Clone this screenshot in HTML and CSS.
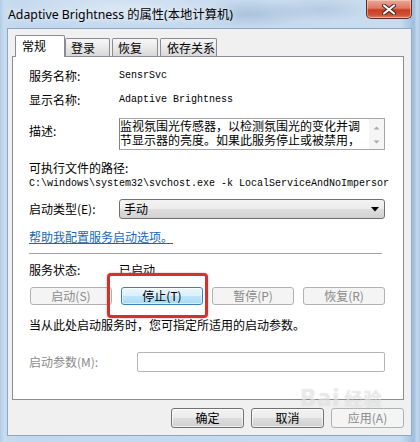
FILE: index.html
```html
<!DOCTYPE html>
<html lang="zh-CN">
<head>
<meta charset="utf-8">
<title>Adaptive Brightness 的属性(本地计算机)</title>
<link rel="stylesheet" href="styles.css">
</head>
<body>
<div class="win">
  <div class="titlebar">
    <span class="title">Adaptive Brightness 的属性(本地计算机)</span>
    <div class="close">
      <svg width="14" height="11" viewBox="0 0 14 11">
        <path d="M2 1.5 L12 9.5 M12 1.5 L2 9.5" stroke="#3b2320" stroke-width="4" stroke-linecap="round"/>
        <path d="M2 1.5 L12 9.5 M12 1.5 L2 9.5" stroke="#ffffff" stroke-width="2.2" stroke-linecap="round"/>
      </svg>
    </div>
  </div>
  <div class="client">
    <div class="tabs">
      <div class="tab active">常规</div>
      <div class="tab t2">登录</div>
      <div class="tab t3">恢复</div>
      <div class="tab t4">依存关系</div>
    </div>
    <div class="panel">
      <div class="row">
        <span class="lbl">服务名称:</span><span class="mono">SensrSvc</span>
      </div>
      <div class="row r2">
        <span class="lbl">显示名称:</span><span class="mono">Adaptive Brightness</span>
      </div>
      <div class="row desc-row">
        <span class="lbl desc-lbl">描述:</span>
        <div class="desc">
          <div class="desc-text">监视氛围光传感器，以检测氛围光的变化并调<br>节显示器的亮度。如果此服务停止或被禁用，</div>
          <div class="sbar">
            <svg width="15" height="32" viewBox="0 0 15 32">
              <path d="M4.5 10.5 L7.5 7.5 L10.5 10.5 Z" fill="#a9a9a9"/>
              <path d="M4.5 21.5 L7.5 24.5 L10.5 21.5 Z" fill="#a9a9a9"/>
            </svg>
          </div>
        </div>
      </div>
      <div class="row r-path">可执行文件的路径:</div>
      <div class="row mono path">C:\windows\system32\svchost.exe -k LocalServiceAndNoImpersor</div>
      <div class="row r-start">
        <span class="lbl">启动类型(E):</span>
        <div class="combo"><span>手动</span>
          <svg width="9" height="5" viewBox="0 0 9 5"><path d="M0 0 H8 L4 4.5 Z" fill="#000"/></svg>
        </div>
      </div>
      <div class="row r-link"><span class="link">帮助我配置服务启动选项。</span></div>
      <div class="sep"></div>
      <div class="row r-status">
        <span class="lbl">服务状态:</span><span>已启动</span>
      </div>
      <div class="btnrow">
        <div class="btn disabled">启动(S)</div>
        <div class="btn focus">停止(T)</div>
        <div class="btn disabled">暂停(P)</div>
        <div class="btn disabled">恢复(R)</div>
      </div>
      <div class="row r-note">当从此处启动服务时，您可指定所适用的启动参数。</div>
      <div class="row r-param">
        <span class="lbl lbl-param">启动参数(M):</span>
        <div class="input"></div>
      </div>
    </div>
    <div class="footer">
      <div class="btn normal">确定</div>
      <div class="btn normal">取消</div>
      <div class="btn disabled">应用(A)</div>
    </div>
  </div>
  <div class="highlight"></div>
  <div class="watermark">Bai<span>经验</span></div>
</div>
</body>
</html>
```

FILE: styles.css
```css
* { box-sizing: border-box; margin: 0; padding: 0; }
html, body { width: 420px; height: 442px; overflow: hidden; }
body {
  font-family: "Noto Sans CJK SC", "Noto Sans", sans-serif;
  font-size: 12px;
  color: #000;
}

.win {
  position: relative;
  width: 420px;
  height: 442px;
  display: flex;
  flex-direction: column;
  padding: 0 8px 6px 7px;
  background:
    radial-gradient(ellipse 60px 14px at 250px 14px, rgba(120,150,185,0.35), transparent),
    radial-gradient(ellipse 50px 12px at 320px 10px, rgba(140,165,195,0.3), transparent),
    radial-gradient(ellipse 120px 18px at 120px 8px, rgba(255,255,255,0.35), transparent),
    linear-gradient(90deg, #b2cbe6 0px, #c8dcf0 4px, #c3d8ee 20px, #c9dcef 400px, #9fbedf 414px, #c6daee 417px, #a9c5e3 420px);
}

.titlebar {
  height: 28px;
  display: flex;
  justify-content: space-between;
  align-items: flex-start;
}
.title {
  font-family: "Noto Sans", "Noto Sans CJK SC", sans-serif;
  font-size: 12.3px;
  line-height: 18px;
  margin-top: 6px;
  margin-left: 1px;
  color: #000;
  text-shadow: 0 0 6px rgba(255,255,255,0.9);
}
.close {
  width: 46px;
  height: 19px;
  border: 1px solid #5a2d27;
  border-top: none;
  border-radius: 0 0 5px 5px;
  background: linear-gradient(#e9a99a 0%, #dd7a63 45%, #c83d22 55%, #d05437 85%, #e4866b 100%);
  display: flex;
  align-items: center;
  justify-content: center;
  box-shadow: inset 0 0 0 1px rgba(255,220,210,0.5);
}

.client {
  flex: 1;
  background: #f0f0f0;
  border: 1px solid #8ea7c2;
  display: flex;
  flex-direction: column;
  padding: 6px 7px 0 4px;
}

.tabs {
  display: flex;
  align-items: flex-end;
  height: 21px;
  padding-left: 3px;
  position: relative;
  z-index: 2;
}
.tab {
  height: 18px;
  border: 1px solid #898c95;
  border-bottom: none;
  border-radius: 2px 2px 0 0;
  background: linear-gradient(#f7f7f7, #e9e9e9 50%, #d8d8d8);
  padding-left: 5px;
  line-height: 17px;
}
.tab.active {
  height: 22px;
  width: 50px;
  margin-bottom: -1px;
  background: #fff;
  padding-left: 6px;
  line-height: 20px;
}
.tab.t2 { width: 45px; }
.tab.t3 { width: 46px; margin-left: 2px; }
.tab.t4 { width: 57px; margin-left: 2px; padding-left: 6px; }

.panel {
  height: 344px;
  border: 1px solid #898c95;
  background: #fff;
  padding: 11px 0 0 16px;
  display: flex;
  flex-direction: column;
}

.row {
  display: flex;
  align-items: center;
  height: 16px;
  line-height: 16px;
  white-space: nowrap;
}
.lbl { width: 90px; flex: none; }
.mono {
  font-family: "Liberation Mono", "Noto Sans CJK SC", monospace;
  font-size: 10px;
}
.r2 { margin-top: 8px; }

.desc-row {
  margin-top: 10px;
  height: 32px;
  align-items: flex-start;
}
.desc-lbl { margin-top: 5px; }
.desc {
  width: 266px;
  height: 32px;
  border: 1px solid #a5a5a5;
  border-left-color: #828282;
  display: flex;
}
.desc-text {
  flex: 1;
  line-height: 14px;
  margin-top: 0;
}
.sbar {
  width: 15px;
  height: 30px;
  background: #f5f5f5;
  flex: none;
}

.r-path { margin-top: 10px; }
.path { height: 16px; }

.r-start { margin-top: 7px; height: 20px; }
.combo {
  width: 266px;
  height: 20px;
  border: 1px solid #707070;
  border-radius: 3px;
  background: linear-gradient(#f3f3f3, #ebebeb 50%, #dddddd 51%, #d2d2d2);
  display: flex;
  align-items: center;
  justify-content: space-between;
  padding: 0 4px 0 4px;
}

.r-link { margin-top: 10px; }
.link { color: #1a66b4; text-decoration: underline; }

.sep {
  margin-top: 8px;
  width: 353px;
  height: 1px;
  background: #a0a0a0;
}
.r-status { margin-top: 8px; }

.btnrow {
  margin-top: 9px;
  width: 355px;
  margin-left: 1px;
  display: flex;
  justify-content: space-between;
}
.btn {
  width: 82px;
  height: 18px;
  border: 1px solid #707070;
  border-radius: 3px;
  display: flex;
  align-items: center;
  justify-content: center;
  line-height: 16px;
}
.btn.disabled {
  border-color: #adb2b5;
  background: #f4f4f4;
  color: #8a8a8a;
}
.btn.focus {
  border-color: #3c7fb1;
  background: linear-gradient(#eaf6fd, #d9f0fc 50%, #bee6fd 51%, #a7d9f5);
  box-shadow: inset 0 0 0 1px rgba(255,255,255,0.6);
}
.btn.normal {
  background: linear-gradient(#f2f2f2, #ebebeb 50%, #dddddd 51%, #cfcfcf);
  box-shadow: inset 0 0 0 1px rgba(255,255,255,0.7);
}

.r-note { margin-top: 12px; }
.r-param { margin-top: 19px; height: 20px; }
.lbl-param { width: 108px; color: #8a8a8a; }
.input {
  width: 248px;
  height: 20px;
  border: 1px solid #b5b5b5;
  border-radius: 2px;
  background: #fff;
}

.footer {
  margin-top: 8px;
  display: flex;
  justify-content: flex-end;
  gap: 7px;
}
.footer .btn { width: 73px; height: 20px; }

.highlight {
  position: absolute;
  left: 107px;
  top: 273px;
  width: 101px;
  height: 45px;
  border: 3px solid #d3312b;
  border-radius: 4px;
  box-shadow: 0 0 2px rgba(200,40,30,0.5);
}

.watermark {
  position: absolute;
  left: 300px;
  top: 380px;
  font-family: "Noto Sans", sans-serif;
  font-size: 24px;
  font-weight: bold;
  color: rgba(255,255,255,0.55);
  text-shadow: 0 0 1px rgba(120,120,120,0.35);
  letter-spacing: 1px;
}
.watermark span {
  font-family: "Noto Sans CJK SC", sans-serif;
  font-size: 18px;
  margin-left: 4px;
}
```
